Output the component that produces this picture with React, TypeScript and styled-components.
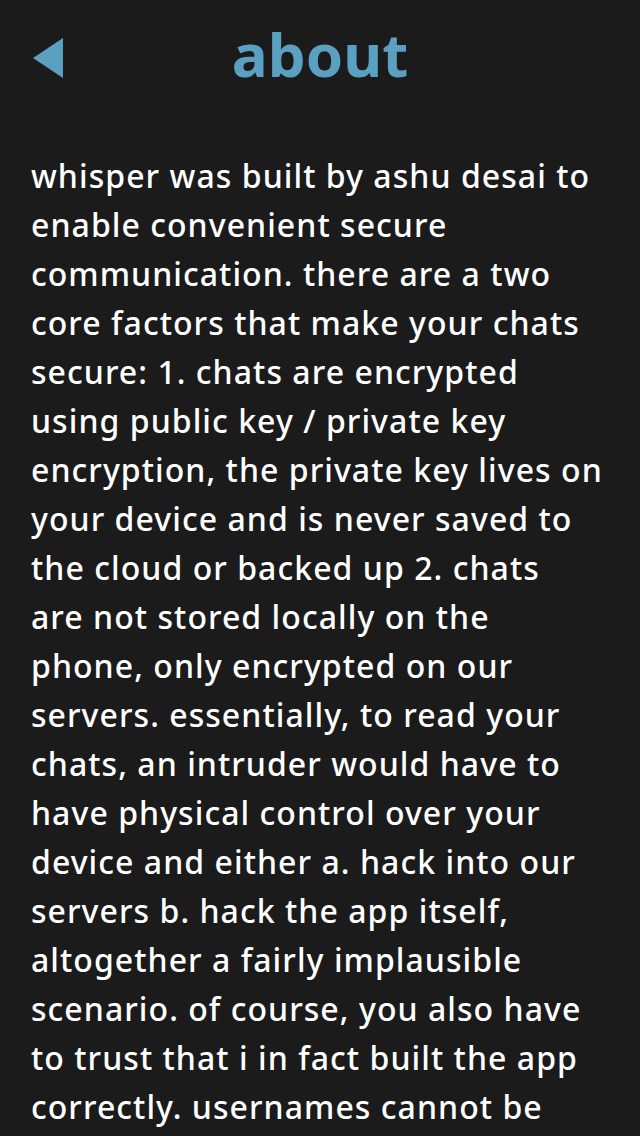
import React from "react";
import styled, { createGlobalStyle } from "styled-components";

const Global = createGlobalStyle`
  html, body {
    margin: 0;
    padding: 0;
    background: #1b1b1b;
  }
  body {
    font-family: "Noto Sans", Lato, sans-serif;
  }
`;

const Screen = styled.div`
  width: 640px;
  height: 1136px;
  background: #1b1b1b;
  overflow: hidden;
  display: flex;
  flex-direction: column;
`;

const Header = styled.header`
  display: grid;
  grid-template-columns: 1fr auto 1fr;
  align-items: center;
  height: 116px;
  padding: 0 33px;
  box-sizing: border-box;
  flex-shrink: 0;
`;

const BackButton = styled.button`
  justify-self: start;
  display: flex;
  align-items: center;
  background: none;
  border: 0;
  padding: 0;
  cursor: pointer;
`;

const Title = styled.h1`
  margin: 0;
  font-family: "Noto Sans", Lato, sans-serif;
  font-weight: 700;
  font-size: 60px;
  line-height: 1;
  color: #5aa1c1;
  padding-bottom: 8px;
`;

const Body = styled.p`
  margin: 0;
  padding: 35px 31px 0 31px;
  color: #ffffff;
  font-family: "Noto Sans", Lato, sans-serif;
  font-weight: 500;
  font-size: 32px;
  line-height: 49px;
  letter-spacing: 1.05px;
  font-variant-ligatures: none;
`;

const Line = styled.span`
  display: block;
  white-space: nowrap;
`;

const lines = [
  "whisper was built by ashu desai to",
  "enable convenient secure",
  "communication. there are a two",
  "core factors that make your chats",
  "secure: 1. chats are encrypted",
  "using public key / private key",
  "encryption, the private key lives on",
  "your device and is never saved to",
  "the cloud or backed up 2. chats",
  "are not stored locally on the",
  "phone, only encrypted on our",
  "servers. essentially, to read your",
  "chats, an intruder would have to",
  "have physical control over your",
  "device and either a. hack into our",
  "servers b. hack the app itself,",
  "altogether a fairly implausible",
  "scenario. of course, you also have",
  "to trust that i in fact built the app",
  "correctly. usernames cannot be",
];

export default function App() {
  return (
    <Screen>
      <Global />
      <Header>
        <BackButton aria-label="back">
          <svg width="30" height="40" viewBox="0 0 30 40">
            <polygon points="30,0 30,40 0,20" fill="#5aa1c1" />
          </svg>
        </BackButton>
        <Title>about</Title>
        <span />
      </Header>
      <Body>
        {lines.map((l, i) => (
          <Line key={i}>{l} </Line>
        ))}
      </Body>
    </Screen>
  );
}
